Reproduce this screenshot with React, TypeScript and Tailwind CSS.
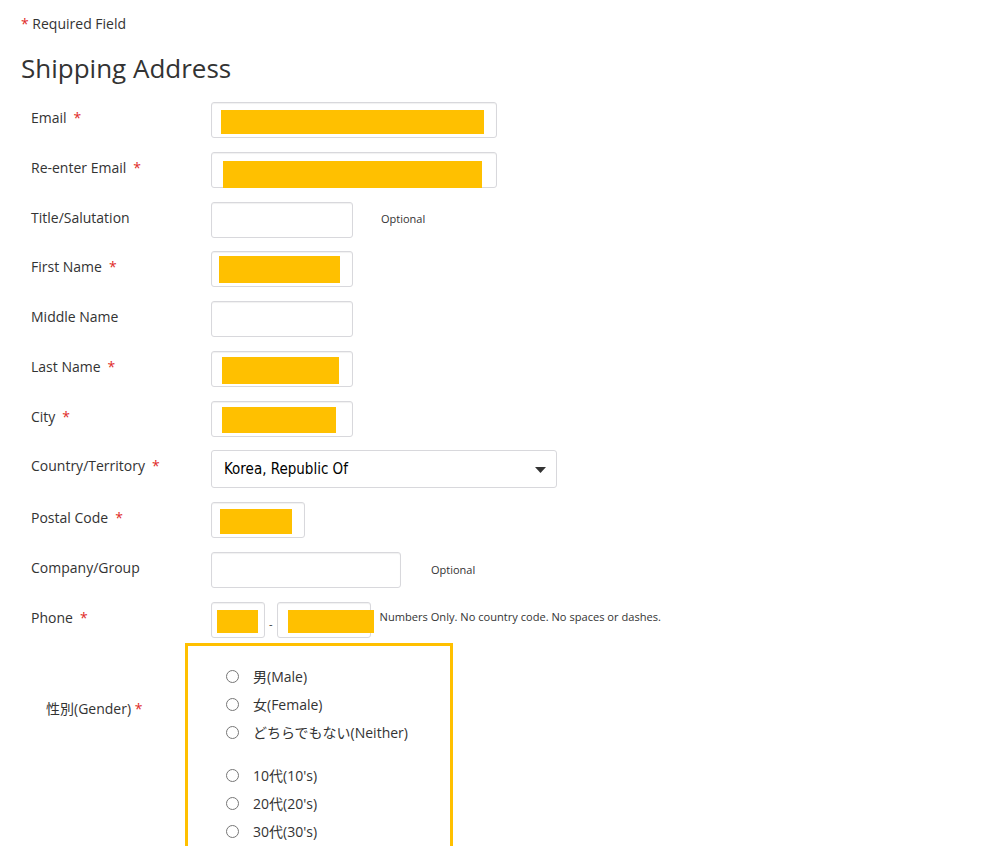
import type { ReactNode } from "react";

const FONT = "font-['Open_Sans','Noto_Sans_CJK_JP',sans-serif]";

function Req() {
  return <span className="ml-[7px] text-[#e02b27]">*</span>;
}

function Box({ w, fill }: { w: number; fill?: { l: number; t: number; w: number; h: number } }) {
  // fake text input; the yellow bar is the redacted value
  return (
    <div
      className="relative h-[36px] shrink-0 rounded-[3px] border border-[#d8d8dc] bg-white shadow-[inset_0_1px_1px_rgba(0,0,0,0.06)]"
      style={{ width: w }}
    >
      {fill && (
        <div className="absolute bg-[#ffc000]" style={{ left: fill.l, top: fill.t, width: fill.w, height: fill.h }} />
      )}
    </div>
  );
}

function Row({ label, req, children, last }: { label: string; req?: boolean; children: ReactNode; last?: boolean }) {
  return (
    <div className={"flex items-start " + (last ? "" : "mb-[13.75px]")}>
      <div className="w-[190px] shrink-0 pl-[10px] pt-[6px] text-[14px] leading-5 text-[#333]">
        {label}
        {req && <Req />}
      </div>
      <div className="flex items-center">{children}</div>
    </div>
  );
}

function Optional({ ml }: { ml: string }) {
  return <span className={"text-[11px] text-[#333] " + ml}>Optional</span>;
}

const GROUP1 = ["男(Male)", "女(Female)", "どちらでもない(Neither)"];
const GROUP2 = ["10代(10's)", "20代(20's)", "30代(30's)"];

function Radio({ label, name }: { label: string; name: string }) {
  return (
    <label className="flex h-[28px] items-center text-[14px] text-[#333]">
      <input type="radio" name={name} className="m-0 h-[13px] w-[13px] shrink-0" />
      <span className="ml-[14px]">{label}</span>
    </label>
  );
}

export default function App() {
  return (
    <div className={`${FONT} bg-white pl-[21px] text-[#333]`}>
      <div className="pt-[14px] text-[14px] leading-5">
        <span className="text-[#e02b27]">*</span> Required Field
      </div>
      <h2 className="mt-[16px] text-[26px] leading-[36px] text-[#333]">Shipping Address</h2>

      <div className="mt-[16px]">
        <Row label="Email" req>
          <Box w={286} fill={{ l: 9, t: 7, w: 263, h: 24 }} />
        </Row>
        <Row label="Re-enter Email" req>
          <Box w={286} fill={{ l: 11, t: 8, w: 259, h: 27 }} />
        </Row>
        <Row label="Title/Salutation">
          <Box w={142} />
          <Optional ml="ml-[28px]" />
        </Row>
        <Row label="First Name" req>
          <Box w={142} fill={{ l: 7, t: 4, w: 121, h: 27 }} />
        </Row>
        <Row label="Middle Name">
          <Box w={142} />
        </Row>
        <Row label="Last Name" req>
          <Box w={142} fill={{ l: 10, t: 5, w: 117, h: 27 }} />
        </Row>
        <Row label="City" req>
          <Box w={142} fill={{ l: 10, t: 5, w: 114, h: 26 }} />
        </Row>
        <Row label="Country/Territory" req>
          <div className="flex h-[38px] w-[346px] items-center justify-between rounded-[3px] border border-[#d8d8dc] bg-white pl-[12px] pr-[10px]">
            <span className="font-['Liberation_Sans_Narrow','DejaVu_Sans_Condensed',sans-serif] text-[15px] font-medium text-black">
              Korea, Republic Of
            </span>
            <svg width="11" height="6" viewBox="0 0 11 6" className="mt-[1px]">
              <path d="M0 0h11L5.5 6z" fill="#333" />
            </svg>
          </div>
        </Row>
        <Row label="Postal Code" req>
          <Box w={94} fill={{ l: 8, t: 6, w: 72, h: 25 }} />
        </Row>
        <Row label="Company/Group">
          <Box w={190} />
          <Optional ml="ml-[30px]" />
        </Row>
        <Row label="Phone" req last>
          <Box w={54} fill={{ l: 5, t: 7, w: 41, h: 23 }} />
          <span className="mx-[4px] mt-[9px] text-[11px]">-</span>
          <div className="relative h-[36px] w-[94px] shrink-0 rounded-[3px] border border-[#d8d8dc] bg-white shadow-[inset_0_1px_1px_rgba(0,0,0,0.06)]">
            <div className="absolute left-[10px] top-[7px] h-[23px] w-[86px] bg-[#ffc000]" />
          </div>
          <span className="ml-[9px] -mt-[5px] text-[11.1px] text-[#333]">
            Numbers Only. No country code. No spaces or dashes.
          </span>
        </Row>
      </div>

      <div className="mt-[5px] flex items-start">
        <div className="w-[164px] shrink-0 pl-[25px] pt-[56px] text-[14px] leading-5 text-[#333]">
          性別(Gender) <span className="text-[#e02b27]">*</span>
        </div>
        <div className="w-[268px] border-[3px] border-[#ffc000] pb-[80px] pl-[38px] pt-[17px]">
          <div>
            {GROUP1.map((g) => (
              <Radio key={g} label={g} name="gender" />
            ))}
          </div>
          <div className="mt-[15px]">
            {GROUP2.map((g) => (
              <Radio key={g} label={g} name="age" />
            ))}
          </div>
        </div>
      </div>
    </div>
  );
}
